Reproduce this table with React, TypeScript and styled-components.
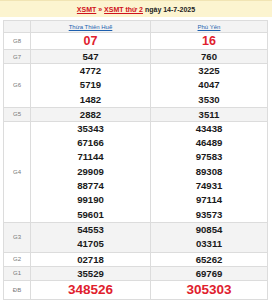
import styled, { createGlobalStyle } from 'styled-components';

const GlobalStyle = createGlobalStyle`
  body {
    margin: 0;
    background: #ffffff;
    font-family: 'Liberation Sans', Arial, sans-serif;
  }
`;

const Page = styled.div`
  width: 272px;
  display: flex;
  flex-direction: column;
  gap: 3px;
`;

const Caption = styled.div`
  height: 16px;
  background: #fcf4d0;
  border-top: 1px solid #f1e4b4;
  display: flex;
  align-items: center;
  justify-content: center;
  font-size: 7px;
  font-weight: bold;
  color: #222;
  white-space: pre;
`;

const CapLink = styled.a`
  color: #d0121b;
  text-decoration: underline;
`;

const Sep = styled.span`
  color: #d0121b;
`;

const TableWrap = styled.div`
  padding: 0 4px 0 3px;
`;

const Table = styled.table`
  width: 100%;
  border-collapse: collapse;
  border: 1px solid #dcdcdc;
  table-layout: fixed;
`;

const Row = styled.tr<{ $stripe?: boolean }>`
  background: ${(p) => (p.$stripe ? '#f3f3f3' : '#ffffff')};
`;

const Head = styled.th`
  height: 11px;
  padding: 0;
  border: 1px solid #dcdcdc;
  font-size: 6px;
  font-weight: normal;
  text-align: center;
  color: #1d5fae;
  text-decoration: underline;
`;

const Label = styled.td`
  padding: 0;
  border: 1px solid #dcdcdc;
  font-size: 6px;
  color: #777;
  text-align: center;
`;

const Cell = styled.td`
  padding: 0;
  border: 1px solid #dcdcdc;
  text-align: center;
`;

// single-line rows are a touch tighter than the stacked ones
const Num = styled.div<{ $big?: 'g8' | 'db'; $single?: boolean }>`
  font-weight: bold;
  font-size: ${(p) => (p.$big === 'db' ? '13.5px' : p.$big === 'g8' ? '12.5px' : '9.6px')};
  line-height: ${(p) =>
    p.$big === 'db' ? '18px' : p.$big === 'g8' ? '16px' : p.$single ? '13px' : '14.3px'};
  color: ${(p) => (p.$big ? '#e0202d' : '#1a1a1a')};
`;

type Prize = { label: string; a: string[]; b: string[]; big?: 'g8' | 'db' };

const prizes: Prize[] = [
  { label: 'G8', a: ['07'], b: ['16'], big: 'g8' },
  { label: 'G7', a: ['547'], b: ['760'] },
  { label: 'G6', a: ['4772', '5719', '1482'], b: ['3225', '4047', '3530'] },
  { label: 'G5', a: ['2882'], b: ['3511'] },
  {
    label: 'G4',
    a: ['35343', '67166', '71144', '29909', '88774', '99190', '59601'],
    b: ['43438', '46489', '97583', '89308', '74931', '97114', '93573'],
  },
  { label: 'G3', a: ['54553', '41705'], b: ['90854', '03311'] },
  { label: 'G2', a: ['02718'], b: ['65262'] },
  { label: 'G1', a: ['35529'], b: ['69769'] },
  { label: 'ĐB', a: ['348526'], b: ['305303'], big: 'db' },
];

export default function App() {
  return (
    <>
      <GlobalStyle />
      <Page>
        <Caption>
          <CapLink>XSMT</CapLink>
          <Sep> » </Sep>
          <CapLink>XSMT thứ 2</CapLink>
          <span> ngày 14-7-2025</span>
        </Caption>
        <TableWrap>
          <Table>
            <colgroup>
              <col style={{ width: 27 }} />
              <col style={{ width: 120 }} />
              <col />
            </colgroup>
            <thead>
              <Row $stripe>
                <Head />
                <Head>Thừa Thiên Huế</Head>
                <Head>Phú Yên</Head>
              </Row>
            </thead>
            <tbody>
              {prizes.map((p, i) => (
                <Row key={p.label} $stripe={i % 2 === 1}>
                  <Label>{p.label}</Label>
                  <Cell>
                    {p.a.map((n) => (
                      <Num key={n} $big={p.big} $single={p.a.length === 1}>{n}</Num>
                    ))}
                  </Cell>
                  <Cell>
                    {p.b.map((n) => (
                      <Num key={n} $big={p.big} $single={p.b.length === 1}>{n}</Num>
                    ))}
                  </Cell>
                </Row>
              ))}
            </tbody>
          </Table>
        </TableWrap>
      </Page>
    </>
  );
}
